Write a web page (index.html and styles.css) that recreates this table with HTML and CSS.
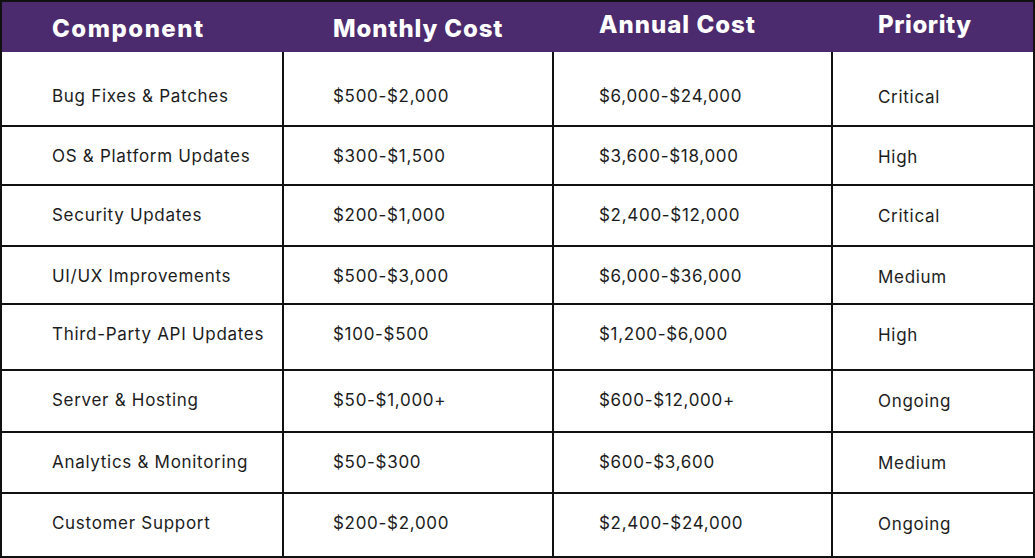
FILE: index.html
```html
<!DOCTYPE html>
<html lang="en">
<head>
<meta charset="utf-8">
<title>Maintenance Cost Breakdown</title>
<link rel="stylesheet" href="styles.css">
</head>
<body>
<div class="table">
  <div class="th">Component</div>
  <div class="th">Monthly Cost</div>
  <div class="th th-up">Annual Cost</div>
  <div class="th th-up">Priority</div>

  <div class="td first">Bug Fixes &amp; Patches</div>
  <div class="td first">$500-$2,000</div>
  <div class="td first">$6,000-$24,000</div>
  <div class="td first pr">Critical</div>

  <div class="td">OS &amp; Platform Updates</div>
  <div class="td">$300-$1,500</div>
  <div class="td">$3,600-$18,000</div>
  <div class="td pr">High</div>

  <div class="td">Security Updates</div>
  <div class="td">$200-$1,000</div>
  <div class="td">$2,400-$12,000</div>
  <div class="td pr">Critical</div>

  <div class="td">UI/UX Improvements</div>
  <div class="td">$500-$3,000</div>
  <div class="td">$6,000-$36,000</div>
  <div class="td pr">Medium</div>

  <div class="td">Third-Party API Updates</div>
  <div class="td">$100-$500</div>
  <div class="td">$1,200-$6,000</div>
  <div class="td pr">High</div>

  <div class="td">Server &amp; Hosting</div>
  <div class="td">$50-$1,000+</div>
  <div class="td">$600-$12,000+</div>
  <div class="td pr">Ongoing</div>

  <div class="td">Analytics &amp; Monitoring</div>
  <div class="td">$50-$300</div>
  <div class="td">$600-$3,600</div>
  <div class="td pr">Medium</div>

  <div class="td last">Customer Support</div>
  <div class="td last">$200-$2,000</div>
  <div class="td last">$2,400-$24,000</div>
  <div class="td last pr">Ongoing</div>
</div>
</body>
</html>
```
FILE: styles.css
```css
html, body {
  margin: 0;
  padding: 0;
  background: #ffffff;
}

.table {
  width: 1035px;
  height: 558px;
  box-sizing: border-box;
  border: 2px solid #111;
  display: grid;
  grid-template-columns: 282px 270px 279px 200px;
  grid-template-rows: 50px 75px 59px 61px 58px 66px 62px 61px 62px;
  font-family: "Inter", "Open Sans", sans-serif;
  color: #1c1c1c;
}

.th {
  background: #4b2a6d;
  color: #ffffff;
  font-weight: 800;
  font-size: 24px;
  line-height: 28px;
  letter-spacing: 1px;
  padding-top: 13px;
  padding-left: 50px;
  box-sizing: border-box;
  white-space: nowrap;
}

.th:nth-child(1) { letter-spacing: 1.5px; }
.th:nth-child(2) { padding-left: 49px; letter-spacing: 0.85px; }
.th:nth-child(3) { padding-left: 45px; }
.th:nth-child(4) { padding-left: 45px; letter-spacing: 0.6px; }
.th-up { padding-top: 9px; }

.td {
  font-size: 17px;
  line-height: 24px;
  letter-spacing: 0.7px;
  padding-top: 17px;
  padding-left: 50px;
  box-sizing: border-box;
  white-space: nowrap;
  border-bottom: 2px solid #111;
  border-right: 2px solid #111;
}

.td:nth-child(4n+2) { padding-left: 49px; }
.td:nth-child(4n+3) { padding-left: 45px; }
.td:nth-child(4n) { padding-left: 45px; }

.td.pr { border-right: none; padding-top: 18px; }
.td.first { padding-top: 32px; }
.td.first.pr { padding-top: 33px; }
.td.last { border-bottom: none; }
```
